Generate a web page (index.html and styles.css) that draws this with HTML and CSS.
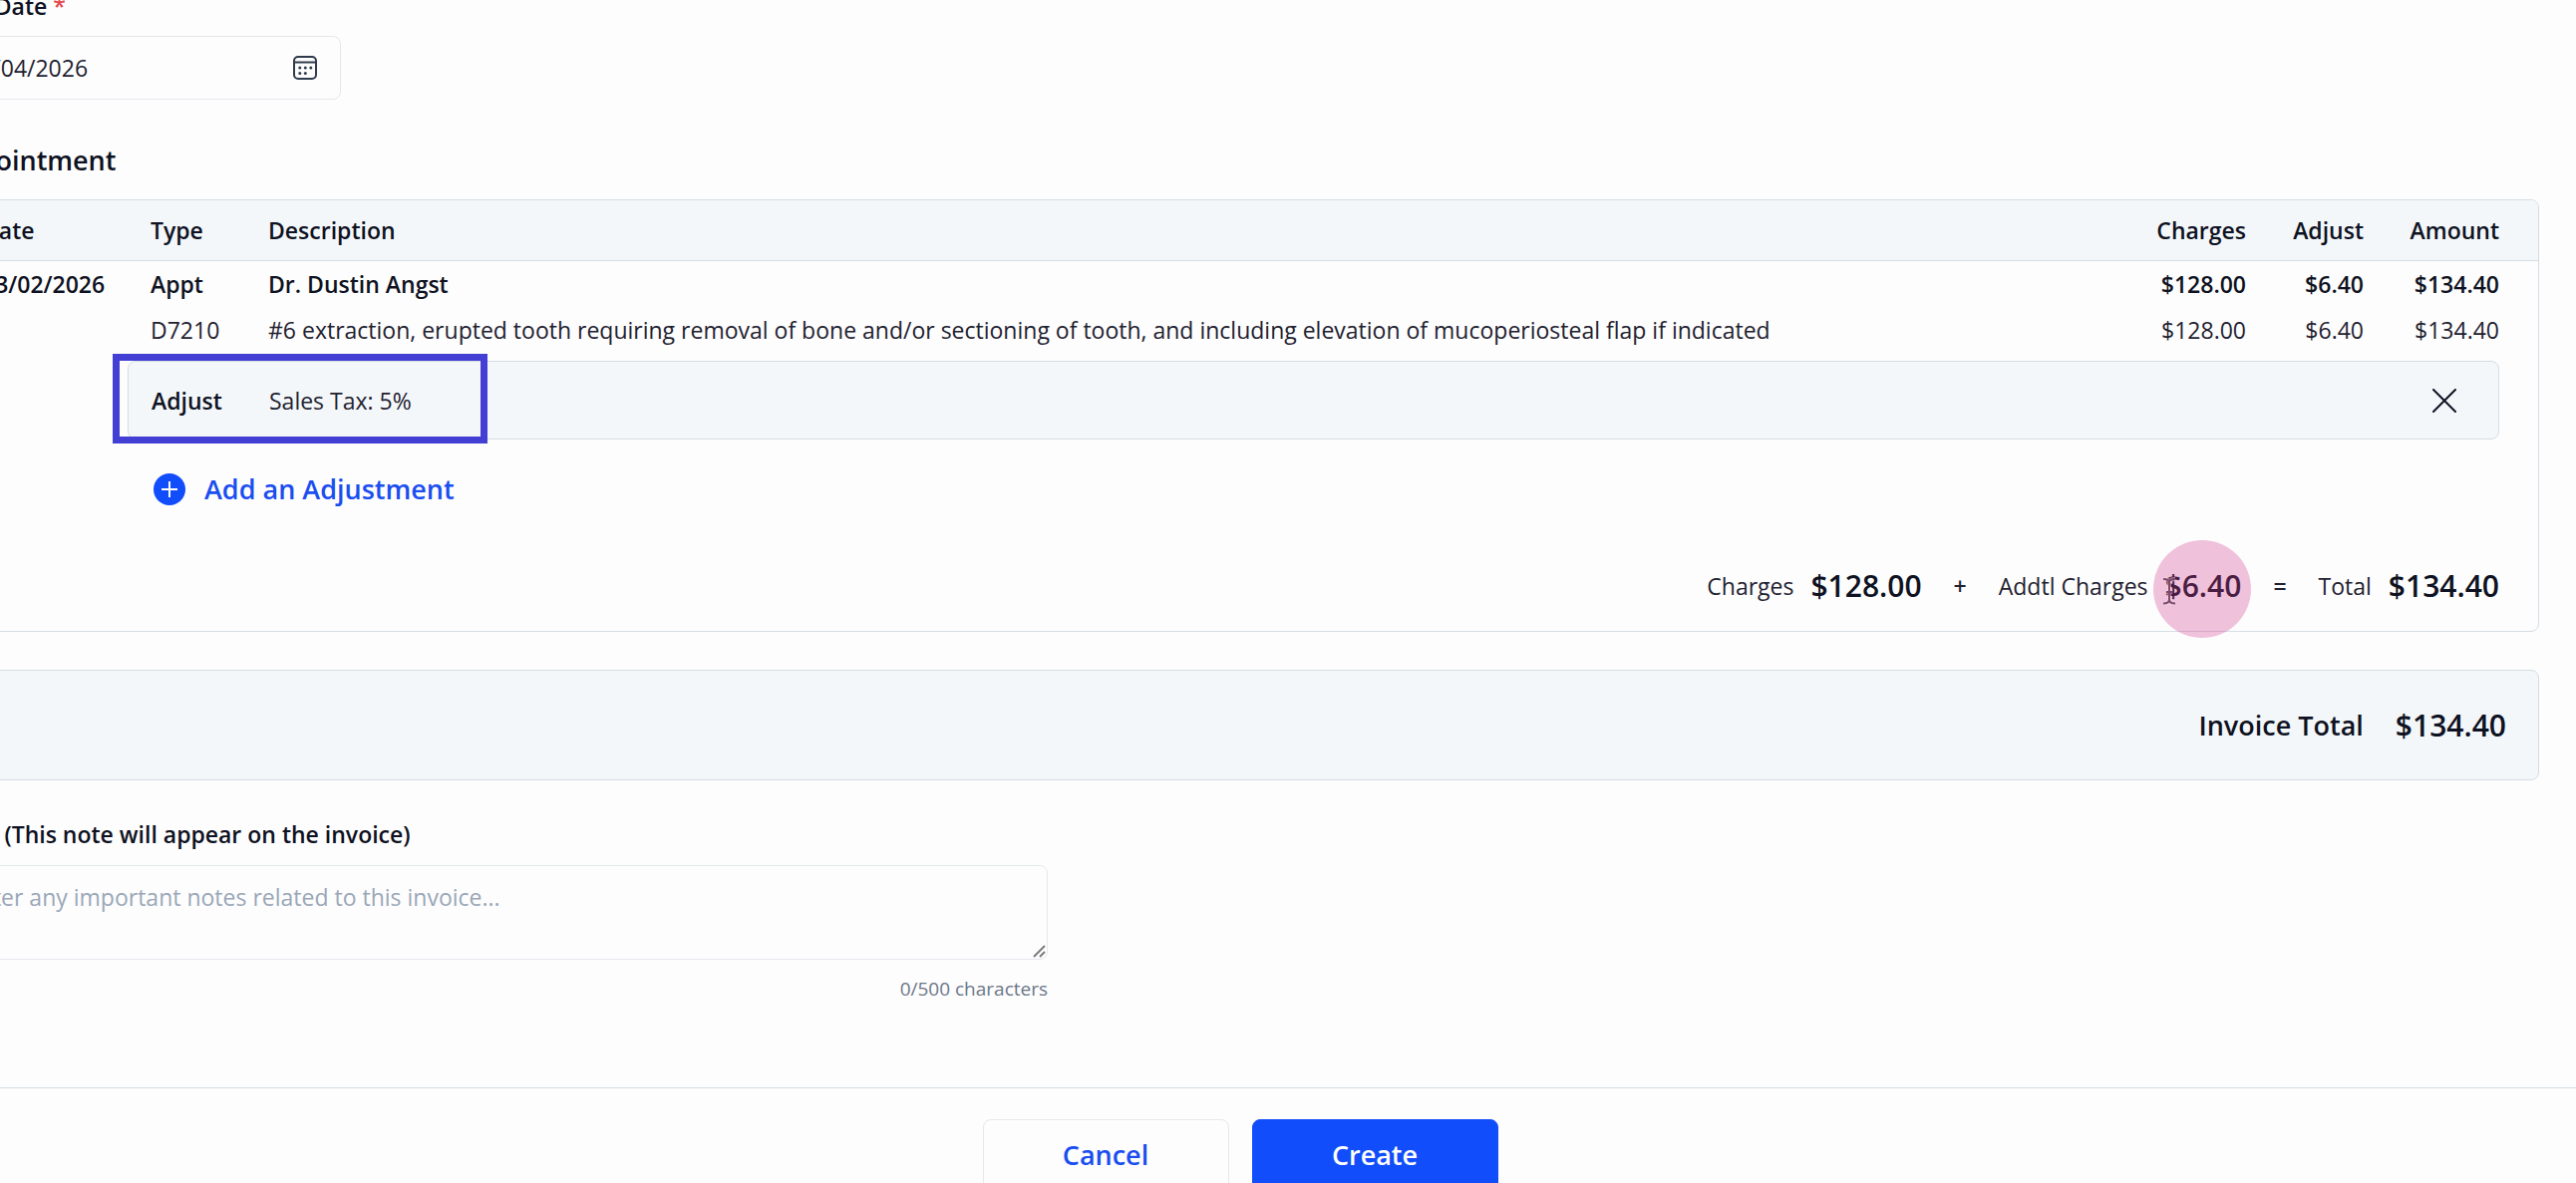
FILE: index.html
```html
<!DOCTYPE html>
<html lang="en">
<head>
<meta charset="utf-8">
<title>Create Invoice</title>
<link rel="stylesheet" href="styles.css">
</head>
<body>
<form class="invoice">
  <label class="label" for="due">Due Date <span class="required">*</span></label>
  <div class="date-field">
    <input class="date-input" id="due" type="text" value="03/04/2026">
    <button class="icon-button" type="button" aria-label="Open calendar">
      <svg width="24" height="24" viewBox="0 0 24 24" fill="none" stroke="#2f3a4c" stroke-width="2"><rect x="1" y="1" width="22" height="22" rx="4"/><path d="M1 6.5h22"/><g fill="#2f3a4c" stroke="none"><circle cx="6.8" cy="12" r="1.5"/><circle cx="12.3" cy="12" r="1.5"/><circle cx="17.8" cy="12" r="1.5"/><circle cx="6.8" cy="17.5" r="1.5"/><circle cx="12.3" cy="17.5" r="1.5"/></g></svg>
    </button>
  </div>

  <h2 class="heading">Appointment</h2>
  <section class="card">
    <table class="lines">
      <colgroup><col class="col-date"><col class="col-type"><col><col class="col-charges"><col class="col-adjust"><col class="col-amount"></colgroup>
      <thead>
        <tr><th>Date</th><th>Type</th><th>Description</th><th class="num">Charges</th><th class="num">Adjust</th><th class="num">Amount</th></tr>
      </thead>
      <tbody>
        <tr class="strong"><td>03/02/2026</td><td>Appt</td><td>Dr. Dustin Angst</td><td class="num">$128.00</td><td class="num">$6.40</td><td class="num">$134.40</td></tr>
        <tr><td></td><td>D7210</td><td>#6 extraction, erupted tooth requiring removal of bone and/or sectioning of tooth, and including elevation of mucoperiosteal flap if indicated</td><td class="num">$128.00</td><td class="num">$6.40</td><td class="num">$134.40</td></tr>
      </tbody>
    </table>
    <div class="adjustments">
      <div class="adjustment">
        <span class="adjustment-type">Adjust</span>
        <span class="adjustment-name">Sales Tax: 5%</span>
        <button class="icon-button" type="button" aria-label="Remove adjustment">
          <svg width="24" height="24" viewBox="0 0 24 24" fill="none" stroke="#0f1222" stroke-width="2" stroke-linecap="round"><path d="M1 1l22 22M23 1L1 23"/></svg>
        </button>
        <span class="highlight"></span>
      </div>
      <button class="add" type="button">
        <svg width="32" height="32" viewBox="0 0 32 32"><circle cx="16" cy="16" r="16" fill="#114dfb"/><path d="M16 8v16M8 16h16" stroke="#fff" stroke-width="2" fill="none"/></svg>
        Add an Adjustment
      </button>
    </div>
    <div class="sums">
      <div class="sum"><span>Charges</span><strong>$128.00</strong></div>
      <span class="operator">+</span>
      <div class="sum"><span>Addtl Charges</span><strong class="pointed">$6.40<span class="halo"><svg width="14" height="31" viewBox="0 0 14 31" fill="none"><path d="M1 4c4 0 6 1 6 3.500v17c0 3-2 4-6 4M13 4c-4 0-6 1-6 3.500v17c0 3 2 4 6 4M4 17h6" stroke="#f6dbe9" stroke-width="4" opacity=".5"/><path d="M1 4c4 0 6 1 6 3.500v17c0 3-2 4-6 4M13 4c-4 0-6 1-6 3.500v17c0 3 2 4 6 4M4 17h6" stroke="#7c4a6e" stroke-width="2"/></svg></span></strong></div>
      <span class="operator">=</span>
      <div class="sum"><span>Total</span><strong>$134.40</strong></div>
    </div>
  </section>

  <section class="total"><span>Invoice Total</span><strong>$134.40</strong></section>

  <div class="note">
    <label class="label" for="note">Note (This note will appear on the invoice)</label>
    <div class="note-box">
      <textarea class="note-input" id="note" placeholder="Enter any important notes related to this invoice..."></textarea>
      <svg class="grip" width="13" height="13" viewBox="0 0 13 13" fill="none" stroke="#7d7d7d" stroke-width="2"><path d="M1 12L12 1M7 12l5-5"/></svg>
    </div>
    <p class="counter">0/500 characters</p>
  </div>
</form>
<footer class="actions">
  <button class="button" type="button">Cancel</button>
  <button class="button primary" type="submit">Create</button>
</footer>
</body>
</html>
```
FILE: styles.css
```css
* { box-sizing: border-box; }

html, body { height: 100%; }

body {
  margin: 0;
  overflow: hidden;
  background: #fdfdfd;
  color: #1f2230;
  font: 400 23px/32px "Open Sans", "Noto Sans", sans-serif;
}

button, input, textarea { font: inherit; color: inherit; }

svg { display: block; }

.invoice { margin: -10px 37px 0 -56px; }

.label {
  display: block;
  font-weight: 600;
  color: #0f1222;
}

.required { color: #e5484d; }

.date-field {
  display: flex;
  align-items: center;
  width: 398px;
  height: 64px;
  margin-top: 14px;
  padding: 0 23px 0 21px;
  border: 1px solid #e5e8ec;
  border-radius: 8px;
}

.date-input {
  flex: 1;
  min-width: 0;
  padding: 0;
  border: 0;
  outline: 0;
  background: none;
}

.icon-button {
  padding: 0;
  border: 0;
  background: none;
}

.heading {
  margin: 44px 0 22px;
  font-size: 27px;
  font-weight: 600;
  line-height: 34px;
  color: #0f1222;
}

.card {
  border: 1px solid #d5dde3;
  border-radius: 8px;
}

.lines {
  width: 100%;
  table-layout: fixed;
  border-spacing: 0;
}

.col-date { width: 206px; }
.col-type { width: 118px; }
.col-charges { width: 150px; }
.col-adjust { width: 118px; }
.col-amount { width: 175px; }

.lines th {
  padding: 14px 0;
  border-bottom: 1px solid #d5dde3;
  background: #f3f7fa;
  font-weight: 600;
  color: #0f1222;
  text-align: left;
}

.lines td { padding: 7px 0; }
.lines th:first-child, .lines td:first-child { padding-left: 37px; }
.lines th:last-child, .lines td:last-child { padding-right: 39px; }
.lines th:first-child { border-top-left-radius: 7px; }
.lines th:last-child { border-top-right-radius: 7px; }
.lines .num { text-align: right; }

.strong { font-weight: 600; color: #0f1222; }

.adjustments { padding: 8px 39px 0 183px; }

.adjustment {
  position: relative;
  display: flex;
  align-items: center;
  height: 79px;
  padding: 0 42px 0 23px;
  border: 1px solid #d5dde3;
  border-radius: 8px;
  background: #f3f7fa;
}

.adjustment-type {
  width: 118px;
  font-weight: 600;
  color: #0f1222;
}

.adjustment-name { flex: 1; }

.highlight {
  position: absolute;
  top: -8px;
  left: -16px;
  width: 376px;
  height: 90px;
  border: 7px solid #443fd4;
}

.add {
  display: flex;
  align-items: center;
  gap: 19px;
  margin: 33px 0 0 26px;
  padding: 0;
  border: 0;
  background: none;
  color: #1a4ef0;
  font-size: 27px;
  font-weight: 600;
  line-height: 34px;
}

.sums {
  display: flex;
  align-items: center;
  justify-content: flex-end;
  gap: 32px;
  padding: 60px 39px 25px 0;
}

.sum {
  display: flex;
  align-items: center;
  gap: 17px;
}

.sum strong, .total strong {
  font-size: 30px;
  font-weight: 600;
  line-height: 40px;
  color: #0f1222;
}

.operator { font-weight: 600; }

.pointed { position: relative; }

.halo {
  position: absolute;
  top: -26px;
  left: -12px;
  width: 98px;
  height: 98px;
  padding: 35px 9px;
  border-radius: 50%;
  background: rgba(213, 56, 143, 0.3);
}

.total {
  display: flex;
  align-items: center;
  justify-content: flex-end;
  gap: 32px;
  height: 111px;
  margin-top: 38px;
  padding-right: 32px;
  border: 1px solid #d5dde3;
  border-radius: 8px;
  background: #f3f7fa;
  font-size: 27px;
  font-weight: 600;
  color: #0f1222;
}

.note {
  width: 1107px;
  max-width: 100%;
  margin-top: 38px;
}

.note-box {
  position: relative;
  margin-top: 15px;
}

.note-input {
  display: block;
  width: 100%;
  height: 95px;
  padding: 15px 21px;
  border: 1px solid #e5e8ec;
  border-radius: 8px;
  outline: 0;
  background: none;
  resize: none;
}

.grip {
  position: absolute;
  right: 2px;
  bottom: 2px;
}

.note-input::placeholder { color: #9aa7b8; }

.counter {
  margin: 13px 0 0;
  font-size: 19px;
  text-align: right;
  color: #6b7789;
}

.actions {
  display: flex;
  justify-content: center;
  gap: 23px;
  margin-top: 83px;
  padding: 31px 96px 32px 0;
  border-top: 1px solid #d5dde3;
}

.button {
  width: 247px;
  height: 72px;
  border: 1px solid #e5e8ec;
  border-radius: 8px;
  background: #fdfdfd;
  color: #1a4ef0;
  font-size: 27px;
  font-weight: 600;
}

.primary {
  border-color: #114dfb;
  background: #114dfb;
  color: #fff;
}
```
